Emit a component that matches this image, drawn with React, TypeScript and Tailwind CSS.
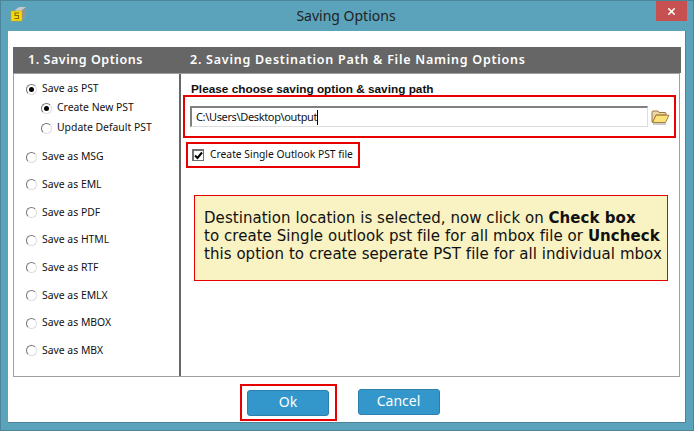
import { X } from 'lucide-react'

const tahoma = "font-['Noto_Sans','DejaVu_Sans',sans-serif]"

function Radio({ checked = false }: { checked?: boolean }) {
  return (
    <span className="w-[11px] h-[11px] rounded-full border border-t-[#777] border-l-[#777] border-r-[#ddd] border-b-[#ddd] bg-white flex items-center justify-center shrink-0">
      {checked && <span className="w-[5px] h-[5px] rounded-full bg-black" />}
    </span>
  )
}

function Option({ label, checked, sub }: { label: string; checked?: boolean; sub?: boolean }) {
  return (
    <div className={`flex items-center gap-[5px] h-[20px] ${sub ? 'pl-[27px]' : 'pl-[12px]'}`}>
      <Radio checked={checked} />
      <span className="text-[10.4px] text-[#111] whitespace-nowrap">{label}</span>
    </div>
  )
}

function AppIcon() {
  return (
    <svg width="17" height="16" viewBox="0 0 17 16">
      <path d="M5 4 L9 1 H16 V10 L12 13 Z" fill="#c4c8c8" />
      <path d="M12 4 L16 1 V10 L12 13 Z" fill="#8f9494" />
      <rect x="1" y="5" width="11" height="10" fill="#f5d80e" stroke="#c9a800" strokeWidth="0.5" />
      <path d="M9 7 H5 V9.5 H8.5 V12.5 H4.5" fill="none" stroke="#8a6d00" strokeWidth="1.1" />
    </svg>
  )
}

function FolderIcon() {
  return (
    <svg width="19" height="16" viewBox="0 0 19 16">
      <path d="M1 13 V3 Q1 2 2 2 H7 L8 3.5 H14 Q15 3.5 15 4.5 V6 H5 L2 13 Z" fill="#e9d9a8" stroke="#9a6a2c" strokeWidth="0.9" />
      <path d="M1.5 13.5 L5 6.2 H18 L14.5 13.5 Z" fill="#f8e27a" stroke="#a0702c" strokeWidth="0.9" />
      <path d="M2 15 H15" stroke="#999" strokeWidth="1" />
    </svg>
  )
}

export default function App() {
  return (
    <div className={`w-[694px] h-[431px] bg-[#5ba2bb] border border-[#4c8599] flex flex-col overflow-hidden ${tahoma}`}>
      <div className="h-[30px] shrink-0 flex items-start">
        <div className="pl-[9px] pt-[5px] w-[26px]"><AppIcon /></div>
        <div className="flex-1 text-center text-[14px] text-[#222] pt-[4px] pl-[9px]">Saving Options</div>
        <div className="w-[31px] h-[20px] bg-[#c75050] flex items-center justify-center mr-[6px]">
          <X className="w-[11px] h-[11px] text-white" strokeWidth={3.5} />
        </div>
      </div>

      <div className="mx-[7px] h-[392px] bg-white border-r border-b border-[#4c8599] flex flex-col">
        <div className="mt-[16px] ml-[5px] w-[668px] h-[330px] flex flex-col">
          <div className="h-[26px] bg-[#666666] flex items-center shrink-0 text-white text-[12.5px] font-semibold tracking-[0.7px]">
            <div className="w-[163px] pl-[15px] whitespace-nowrap tracking-[0.55px]">1. Saving Options</div>
            <div className="pl-[14px] whitespace-nowrap tracking-[0.75px]">2. Saving Destination Path &amp; File Naming Options</div>
          </div>
          <div className="flex-1 flex border-l border-r border-b border-t border-[#a0a0a0] mr-[1px] min-h-0">
            <div className="w-[167px] border-r-2 border-[#666666] pt-[5px] flex flex-col shrink-0">
              <Option label="Save as PST" checked />
              <div className="-mt-px"><Option label="Create New PST" checked sub /></div>
              <Option label="Update Default PST" sub />
              <div className="flex flex-col gap-[7.7px] mt-[9px]">
                <Option label="Save as MSG" />
                <Option label="Save as EML" />
                <Option label="Save as PDF" />
                <Option label="Save as HTML" />
                <Option label="Save as RTF" />
                <Option label="Save as EMLX" />
                <Option label="Save as MBOX" />
                <Option label="Save as MBX" />
              </div>
            </div>
            <div className="flex-1 min-w-0 pt-[7px]">
              <div className="pl-[10px] text-[11.8px] font-bold text-[#111] leading-[16px] font-['Liberation_Sans',sans-serif]">Please choose saving option &amp; saving path</div>
              <div className="mt-[-2px] ml-[2px] w-[493px] h-[43px] border-[2px] border-[#e60000] flex items-center pl-[5px] gap-[3px]">
                <div className="w-[458px] h-[21px] border-t-2 border-l-2 border-[#808080] border-r border-b border-r-[#ddd] border-b-[#ddd] flex items-center pl-[4px] text-[11px] tracking-[-0.35px] text-[#111]">
                  C:\Users\Desktop\output<span className="w-px h-[15px] bg-black" />
                </div>
                <FolderIcon />
              </div>
              <div className="mt-[4px] ml-[5px] w-[174px] h-[26px] border-[2px] border-[#e60000] flex items-center pl-[4px] gap-[6px]">
                <span className="w-[12px] h-[12px] border border-t-2 border-l-2 border-[#707070] bg-white flex items-center justify-center">
                  <svg width="9" height="9" viewBox="0 0 9 9"><path d="M1 4.5 L3.5 7 L8 1.5" fill="none" stroke="#000" strokeWidth="2" /></svg>
                </span>
                <span className="text-[10.3px] text-[#111] whitespace-nowrap">Create Single Outlook PST file</span>
              </div>
              <div className="mt-[27px] ml-[13px] w-[474px] h-[86px] bg-[#f9f2c2] border border-[#e60000] pt-[13px] pl-[9px] text-[15px] tracking-[0.05px] leading-[18px] text-[#111] whitespace-nowrap font-['DejaVu_Sans',sans-serif]">
                <div>Destination location is selected, now click on <b>Check box</b></div>
                <div>to create Single outlook pst file for all mbox file or <b>Uncheck</b></div>
                <div>this option to create seperate PST file for all individual mbox</div>
              </div>
            </div>
          </div>
        </div>

        <div className="flex-1 flex items-start justify-center gap-[21px] pr-[14px] pt-[7px]">
          <div className="w-[97px] h-[37px] border-[2px] border-[#e60000] flex items-center justify-center">
            <button className="w-[82px] h-[26px] rounded-[3px] bg-[#3497cc] border border-[#2a80ad] text-white text-[14px] leading-[20px] pb-[2px]">Ok</button>
          </div>
          <button className="mt-[5px] w-[82px] h-[26px] rounded-[3px] bg-[#3497cc] border border-[#2a80ad] text-white text-[14px] leading-[20px] pb-[2px]">Cancel</button>
        </div>
      </div>
    </div>
  )
}
